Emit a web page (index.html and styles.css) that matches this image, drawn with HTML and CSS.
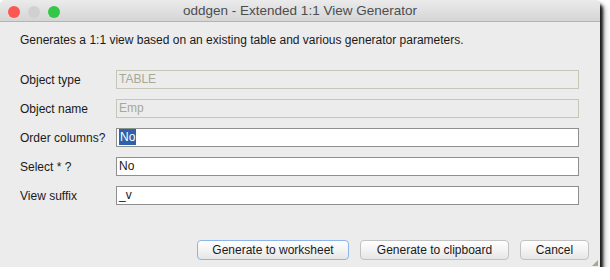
FILE: index.html
```html
<!DOCTYPE html>
<html lang="en">
<head>
  <meta charset="UTF-8">
  <title>oddgen - Extended 1:1 View Generator</title>
  <link rel="stylesheet" href="styles.css">
</head>
<body>
  <div class="window">
    <div class="titlebar">
      <div class="lights">
        <span class="light red"></span>
        <span class="light grey"></span>
        <span class="light green"></span>
      </div>
      <div class="title">oddgen - Extended 1:1 View Generator</div>
    </div>

    <div class="content">
      <p class="desc">Generates a 1:1 view based on an existing table and various generator parameters.</p>

      <div class="form">
        <label>Object type</label>
        <div class="field disabled">TABLE</div>
        <label>Object name</label>
        <div class="field disabled">Emp</div>
        <label>Order columns?</label>
        <div class="field"><span class="sel">No</span></div>
        <label>Select * ?</label>
        <div class="field">No</div>
        <label>View suffix</label>
        <div class="field">_v</div>
      </div>

      <div class="buttons">
        <button class="btn default w1">Generate to worksheet</button>
        <button class="btn w2">Generate to clipboard</button>
        <button class="btn w3">Cancel</button>
      </div>
    </div>
    <div class="grip"></div>
  </div>
</body>
</html>
```

FILE: styles.css
```css
body {
  margin: 0;
  background: #fff;
  font-family: 'Liberation Sans', Arial, sans-serif;
  color: #1a1a1a;
}
.window {
  position: relative;
  width: 600px;
  height: 267px;
  background: #ececec;
  border-radius: 5px 5px 0 0;
  box-shadow: 3px 4px 3px rgba(0,0,0,0.85), 4px 5px 6px rgba(0,0,0,0.35);
  overflow: hidden;
}
.titlebar {
  position: relative;
  height: 21px;
  background: linear-gradient(to bottom, #ebebeb, #d5d5d5);
  border-bottom: 1px solid #b4b4b4;
  display: flex;
  align-items: center;
  justify-content: center;
}
.lights {
  position: absolute;
  left: 8px;
  top: 6px;
  display: flex;
  gap: 8px;
}
.light {
  width: 12px;
  height: 12px;
  border-radius: 50%;
}
.red { background: #fc5753; }
.grey { background: #d0d0d0; }
.green { background: #33c748; }
.title {
  font-size: 13.5px;
  color: #4d4d4d;
}
.content {
  padding: 11px 21px 0 20px;
}
.desc {
  margin: 0;
  font-size: 12px;
  line-height: 15px;
}
.form {
  margin-top: 22px;
  display: grid;
  grid-template-columns: 96px 1fr;
  row-gap: 10px;
  align-items: center;
}
.form label {
  font-size: 12px;
}
.field {
  height: 17px;
  border: 1px solid #8f8f8f;
  background: #fff;
  font-size: 12px;
  line-height: 17px;
  padding-left: 2px;
}
.field.disabled {
  border-color: #c4c6b6;
  background: #ececec;
  color: #a6a897;
}
.sel {
  background: #2e63a8;
  color: #fff;
  padding: 1px 1px;
}
.buttons {
  margin-top: 35px;
  margin-right: -10px;
  display: flex;
  justify-content: flex-end;
  gap: 11px;
}
.btn {
  height: 20px;
  font-family: inherit;
  font-size: 12px;
  color: #1a1a1a;
  border: 1px solid #c2c2c2;
  border-radius: 4px;
  background: linear-gradient(to bottom, #ffffff, #f3f3f3 50%, #e6e6e6);
  padding: 0;
}
.btn.default {
  border-color: #8db5ea;
}
.w1 { width: 152px; }
.w2 { width: 149px; }
.w3 { width: 69px; }
.grip {
  position: absolute;
  right: 2px;
  bottom: 1px;
  width: 0;
  height: 0;
  border-left: 6px solid transparent;
  border-bottom: 6px solid #a7a796;
}
```
